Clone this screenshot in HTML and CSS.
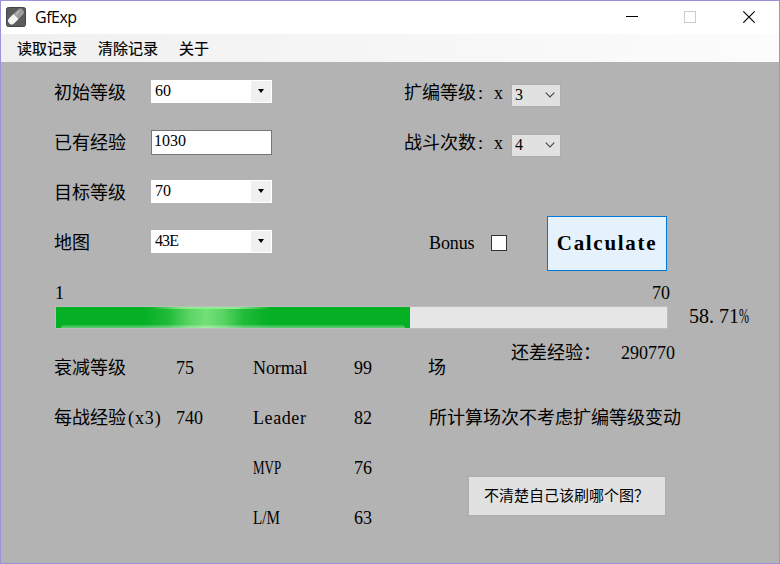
FILE: index.html
```html
<!DOCTYPE html>
<html lang="zh-CN">
<head>
<meta charset="utf-8">
<title>GfExp</title>
<link rel="stylesheet" href="styles.css">
</head>
<body>
<div class="window">
  <header class="titlebar">
    <svg class="app-icon" width="20" height="20" viewBox="0 0 20 20">
      <rect x=".5" y=".5" width="19" height="19" rx="2" fill="#5b5b5b" stroke="#3d4747"/>
      <g transform="rotate(-45 10 9.5)">
        <rect x="0.5" y="6" width="19" height="7" rx="3.5" fill="#9c9c9c"/>
        <path d="M10 6H4a3.5 3.5 0 0 0 0 7h6z" fill="#f4f4f4"/>
        <path d="M11 8h5" stroke="#bbb" stroke-width="1.5"/>
      </g>
    </svg>
    <span class="title">GfExp</span>
    <svg class="controls" width="130" height="13" viewBox="0 0 130 13">
      <path d="M0 6.5h12" stroke="#000"/>
      <rect x="58.5" y="1.5" width="11" height="11" fill="none" stroke="#ccc"/>
      <path d="M117.3 1.3l11.4 11.4M128.7 1.3l-11.4 11.4" stroke="#000" stroke-width="1.1"/>
    </svg>
  </header>
  <nav class="menubar"><span>读取记录</span><span>清除记录</span><span>关于</span></nav>
  <main class="client">
    <section class="form">
      <div class="fields">
        <span class="label">初始等级</span><div class="combo">60<i class="drop"></i></div>
        <span class="label">已有经验</span><div class="textbox">1030</div>
        <span class="label">目标等级</span><div class="combo">70<i class="drop"></i></div>
        <span class="label">地图</span><div class="combo"><span class="map">43E</span><i class="drop"></i></div>
      </div>
      <div class="options">
        <div class="option"><span class="option-label label">扩编等级</span><span class="cell label">:</span><span class="times label">x</span>
          <div class="select">3<svg width="10" height="6" viewBox="0 0 10 6"><path d="M.7.7L5 5 9.3.7" fill="none" stroke="#444" stroke-width="1.1"/></svg></div></div>
        <div class="option"><span class="option-label label">战斗次数</span><span class="cell label">:</span><span class="times label">x</span>
          <div class="select">4<svg width="10" height="6" viewBox="0 0 10 6"><path d="M.7.7L5 5 9.3.7" fill="none" stroke="#444" stroke-width="1.1"/></svg></div></div>
        <div class="actions"><span class="bonus label">Bonus</span><span class="checkbox"></span><div class="calculate">Calculate</div></div>
      </div>
    </section>
    <section class="progress">
      <div class="meter">
        <div class="ends"><span>1</span><span>70</span></div>
        <div class="track"><div class="fill"></div></div>
      </div>
      <div class="percent">58<span class="pc">.</span>71<span class="pc"><span class="narrow">%</span></span></div>
    </section>
    <section class="results">
      <span>衰减等级</span><span>75</span><span class="normal">Normal</span><span>99</span>
      <div class="remaining"><span>场</span><span class="need">还差经验：</span><span class="need-value">290770</span></div>
      <span>每战经验<span class="multi">(x3)</span></span><span>740</span><span class="leader">Leader</span><span>82</span>
      <span class="note">所计算场次不考虑扩编等级变动</span>
      <span></span><span></span><span class="mvp">MVP</span><span>76</span><span></span>
      <span></span><span></span><span class="lm">L/M</span><span>63</span>
      <div class="help">不清楚自己该刷哪个图？</div>
    </section>
  </main>
</div>
</body>
</html>
```
FILE: styles.css
```css
* { box-sizing: border-box; }
body { margin: 0; }
.window {
  width: 780px; height: 564px;
  display: flex; flex-direction: column;
  border: 1px solid #9994d9;
  background: #b3b3b3;
  color: #000;
  font: 18px/24px "Liberation Serif", "Noto Sans CJK SC", serif;
  white-space: nowrap;
  overflow: hidden;
}
.titlebar { height: 33px; display: flex; align-items: center; padding: 0 23px 2px 5px; background: #fff; }
.title { flex: 1; margin-left: 9px; padding-top: 1px; font: 16px/20px "Open Sans", "Noto Sans", sans-serif; letter-spacing: -.5px; }
.menubar {
  height: 28px; display: flex; gap: 21px; padding-left: 16px;
  background: linear-gradient(90deg, #f0f0f0, #fcfcfc);
  font: 15px/28px "Noto Sans CJK SC", sans-serif;
  -webkit-text-stroke: .2px #000;
}
.client { flex: 1; padding: 5px 0 0 53px; }
.form { display: flex; height: 200px; }
.label { padding-top: 2px; }
.fields { width: 350px; display: grid; grid-template-columns: 97px 121px; grid-auto-rows: 50px; align-items: center; }
.combo, .textbox { background: #fff; font-size: 16px; }
.combo { height: 23px; margin-bottom: 2px; padding: 1px 1px 1px 4px; line-height: 26px; display: flex; align-items: center; justify-content: space-between; }
.map { letter-spacing: -.9px; }
.drop { width: 20px; height: 21px; background: #f0f0f0; display: grid; place-items: center; }
.drop::before { content: ""; border: 3.5px solid transparent; border-top: 4px solid #000; border-bottom: 0; }
.textbox { height: 25px; border: 1px solid #777; padding: 0 2px; line-height: 20px; }
.option { height: 50px; display: flex; align-items: center; }
.option-label { width: 72px; }
.cell { width: 18px; padding-left: 2px; }
.times { width: 17px; }
.select {
  width: 50px; height: 23px; margin-top: 6px; padding: 0 5px 0 3px; line-height: 26px;
  display: flex; align-items: center; justify-content: space-between;
  background: #e1e1e1; border: 1px solid #adadad; font-size: 16px;
}
.actions { height: 100px; padding: 52px 0 0 25px; display: flex; align-items: center; }
.bonus { width: 62px; letter-spacing: -.1px; padding-top: 0; }
.checkbox { width: 16px; height: 16px; background: #fff; border: 1px solid #333; }
.calculate {
  width: 120px; height: 55px; margin-left: 40px;
  background: #e5f1fb; border: 1px solid #0078d7;
  font-size: 21px; font-weight: bold; line-height: 53px; text-align: center; letter-spacing: 1.7px;
}
.progress { height: 75px; display: flex; }
.meter { width: 614px; padding: 14px 0 0 1px; }
.ends { display: flex; justify-content: space-between; height: 25px; margin-right: -2px; }
.track { height: 23px; background: #e6e6e6; border: 1px solid #bcbcbc; }
.fill {
  width: 354px; height: 21px; position: relative;
  background: linear-gradient(90deg, #06b025 88px, #20bb39 112px, #5cd565 134px, #72e077 150px, #5cd565 166px, #20bb39 188px, #06b025 212px);
}
.fill::before, .fill::after { content: ""; position: absolute; height: 2px; }
.fill::before { top: 0; left: 95px; width: 120px; background: linear-gradient(90deg, transparent, #8bed8d 30%, #8bed8d 70%, transparent); }
.fill::after { bottom: 0; left: 5px; right: 5px; height: 3px; background: linear-gradient(#ffffff20, #ffffff60); border-radius: 3px 3px 0 0; }
.percent { margin-left: 21px; padding-top: 37px; font-size: 20px; display: flex; }
.pc { width: 10px; }
.narrow { display: inline-block; transform: scaleX(.6); transform-origin: 0 50%; }
.results { display: grid; grid-template-columns: 122px 77px 101px 74px 1fr; grid-auto-rows: 50px; align-items: center; padding-top: 1px; }
.normal { letter-spacing: -.1px; }
.leader { letter-spacing: .6px; }
.multi { margin-left: 2px; letter-spacing: .9px; }
.mvp, .lm { justify-self: start; transform-origin: 0 50%; }
.mvp { transform: scaleX(.72); }
.lm { transform: scaleX(.84); }
.remaining { display: flex; }
.need { width: 110px; margin-left: 65px; }
.need, .need-value { margin-top: -15px; height: 39px; }
.note { padding-left: 1px; }
.help {
  width: 198px; height: 40px; margin: -44px 0 0 40px; padding-left: 15px;
  background: #e1e1e1; border: 1px solid #adadad;
  font-size: 15px; line-height: 38px;
}
```
